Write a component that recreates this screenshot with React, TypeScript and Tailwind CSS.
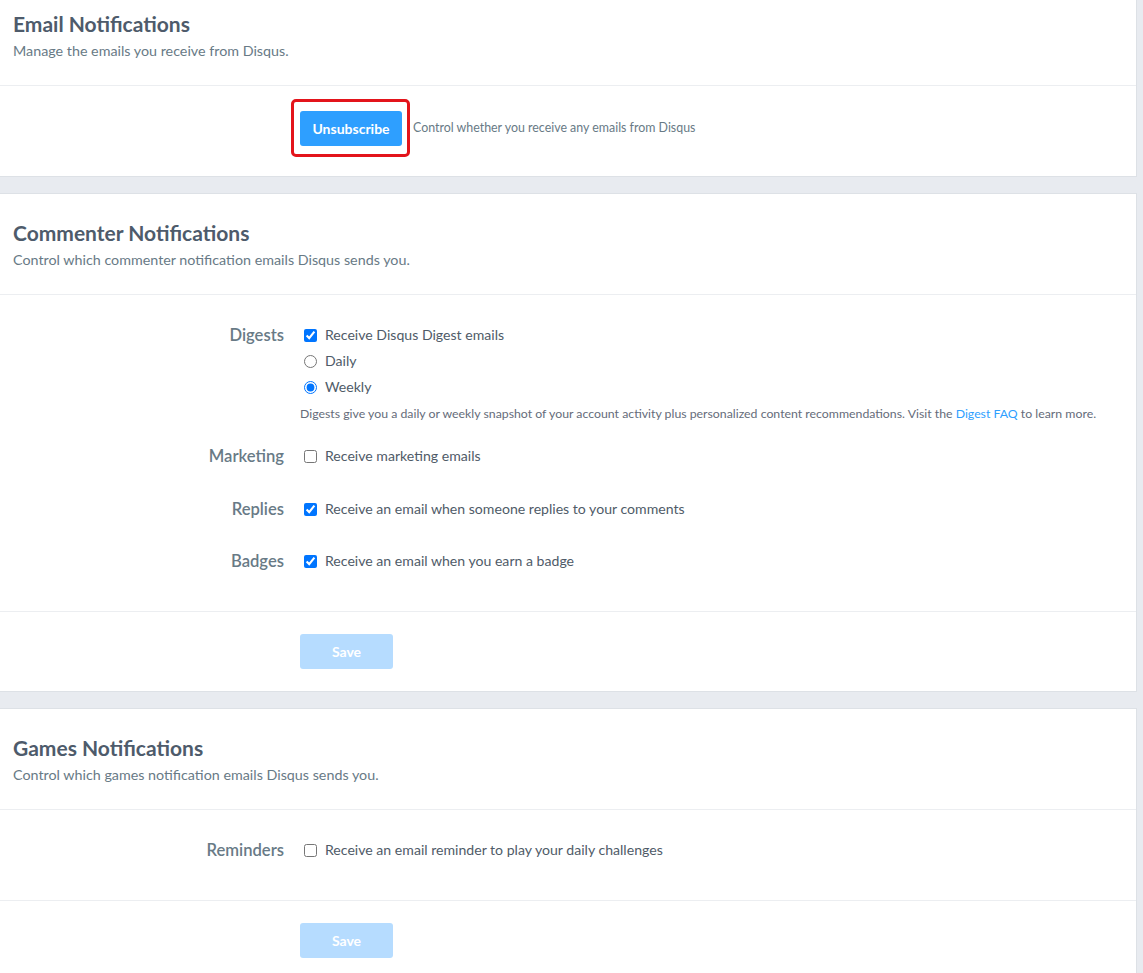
import { ReactNode } from 'react'

const font = "font-['Lato','Noto_Sans',sans-serif]"

function Card({ title, subtitle, children }: { title: string; subtitle: string; children: ReactNode }) {
  return (
    <section className="mr-[6px] border-y border-r border-[#dde1e6] bg-white">
      <header className="border-b border-[#eceef1] pl-[13px] pt-[26px] pb-[24px]">
        <h2 className="text-[21px] font-bold leading-[26px] text-[#4e5b6b]">{title}</h2>
        <p className="mt-[4px] text-[14.3px] leading-[20px] text-[#687a86]">{subtitle}</p>
      </header>
      {children}
    </section>
  )
}

function Field({ label, children, className = '' }: { label: string; children: ReactNode; className?: string }) {
  return (
    <div className={`grid grid-cols-[284px_1fr] gap-4 ${className}`}>
      <div className="text-right text-[16.6px] font-semibold leading-[26px] text-[#687a86]">{label}</div>
      <div>{children}</div>
    </div>
  )
}

function Option({ type, checked, name, children }: { type: 'checkbox' | 'radio'; checked?: boolean; name?: string; children: ReactNode }) {
  return (
    <label className="flex h-[26px] items-center text-[14.1px] text-[#4f5b68]">
      <input
        type={type}
        name={name}
        defaultChecked={checked}
        className="mt-0 mr-[8px] ml-[4px] h-[13px] w-[13px] accent-[#0075ff]"
      />
      {children}
    </label>
  )
}

function SaveRow() {
  return (
    <div className="grid grid-cols-[284px_1fr] gap-4 border-t border-[#eceef1] pt-[22px] pb-[22px]">
      <div />
      <div>
        <button
          disabled
          className="h-[35px] w-[93px] rounded-[3px] bg-[#b6dcff] text-[14px] font-bold text-white"
        >
          Save
        </button>
      </div>
    </div>
  )
}

export default function App() {
  return (
    <div className={`${font} min-h-screen overflow-hidden bg-[#e8ebf0]`}>
      {/* page is scrolled a little, so the first card's top sits above the fold */}
      <div className="-mt-[16px] flex flex-col gap-4">
        <Card title="Email Notifications" subtitle="Manage the emails you receive from Disqus.">
          <div className="grid grid-cols-[284px_1fr] gap-4 pt-[25px] pb-[30px]">
            <div />
            <div className="flex items-center">
              <div className="relative">
                <button className="h-[35px] w-[102px] rounded-[3px] bg-[#2e9fff] text-[14px] font-bold text-white">
                  Unsubscribe
                </button>
                <span className="pointer-events-none absolute -top-[12px] -bottom-[11px] -left-[9px] -right-[8px] rounded-[5px] border-[3px] border-[#e3141b]" />
              </div>
              <span className="ml-[11px] text-[12.4px] text-[#687a86]">Control whether you receive any emails from Disqus</span>
            </div>
          </div>
        </Card>

        <Card title="Commenter Notifications" subtitle="Control which commenter notification emails Disqus sends you.">
          <div className="pt-[27px] pb-[37px]">
            <Field label="Digests" className="mb-[20px]">
              <Option type="checkbox" checked>Receive Disqus Digest emails</Option>
              <Option type="radio" name="freq">Daily</Option>
              <Option type="radio" name="freq" checked>Weekly</Option>
              <p className="mt-[5px] text-[12.3px] leading-[18px] text-[#656c7a]">
                Digests give you a daily or weekly snapshot of your account activity plus personalized content
                recommendations. Visit the <a className="text-[#2e9fff]">Digest FAQ</a> to learn more.
              </p>
            </Field>
            <Field label="Marketing" className="mb-[27px]">
              <Option type="checkbox">Receive marketing emails</Option>
            </Field>
            <Field label="Replies" className="mb-[26px]">
              <Option type="checkbox" checked>Receive an email when someone replies to your comments</Option>
            </Field>
            <Field label="Badges">
              <Option type="checkbox" checked>Receive an email when you earn a badge</Option>
            </Field>
          </div>
          <SaveRow />
        </Card>

        <Card title="Games Notifications" subtitle="Control which games notification emails Disqus sends you.">
          <div className="pt-[27px] pb-[37px]">
            <Field label="Reminders">
              <Option type="checkbox">Receive an email reminder to play your daily challenges</Option>
            </Field>
          </div>
          <SaveRow />
        </Card>
      </div>
    </div>
  )
}
